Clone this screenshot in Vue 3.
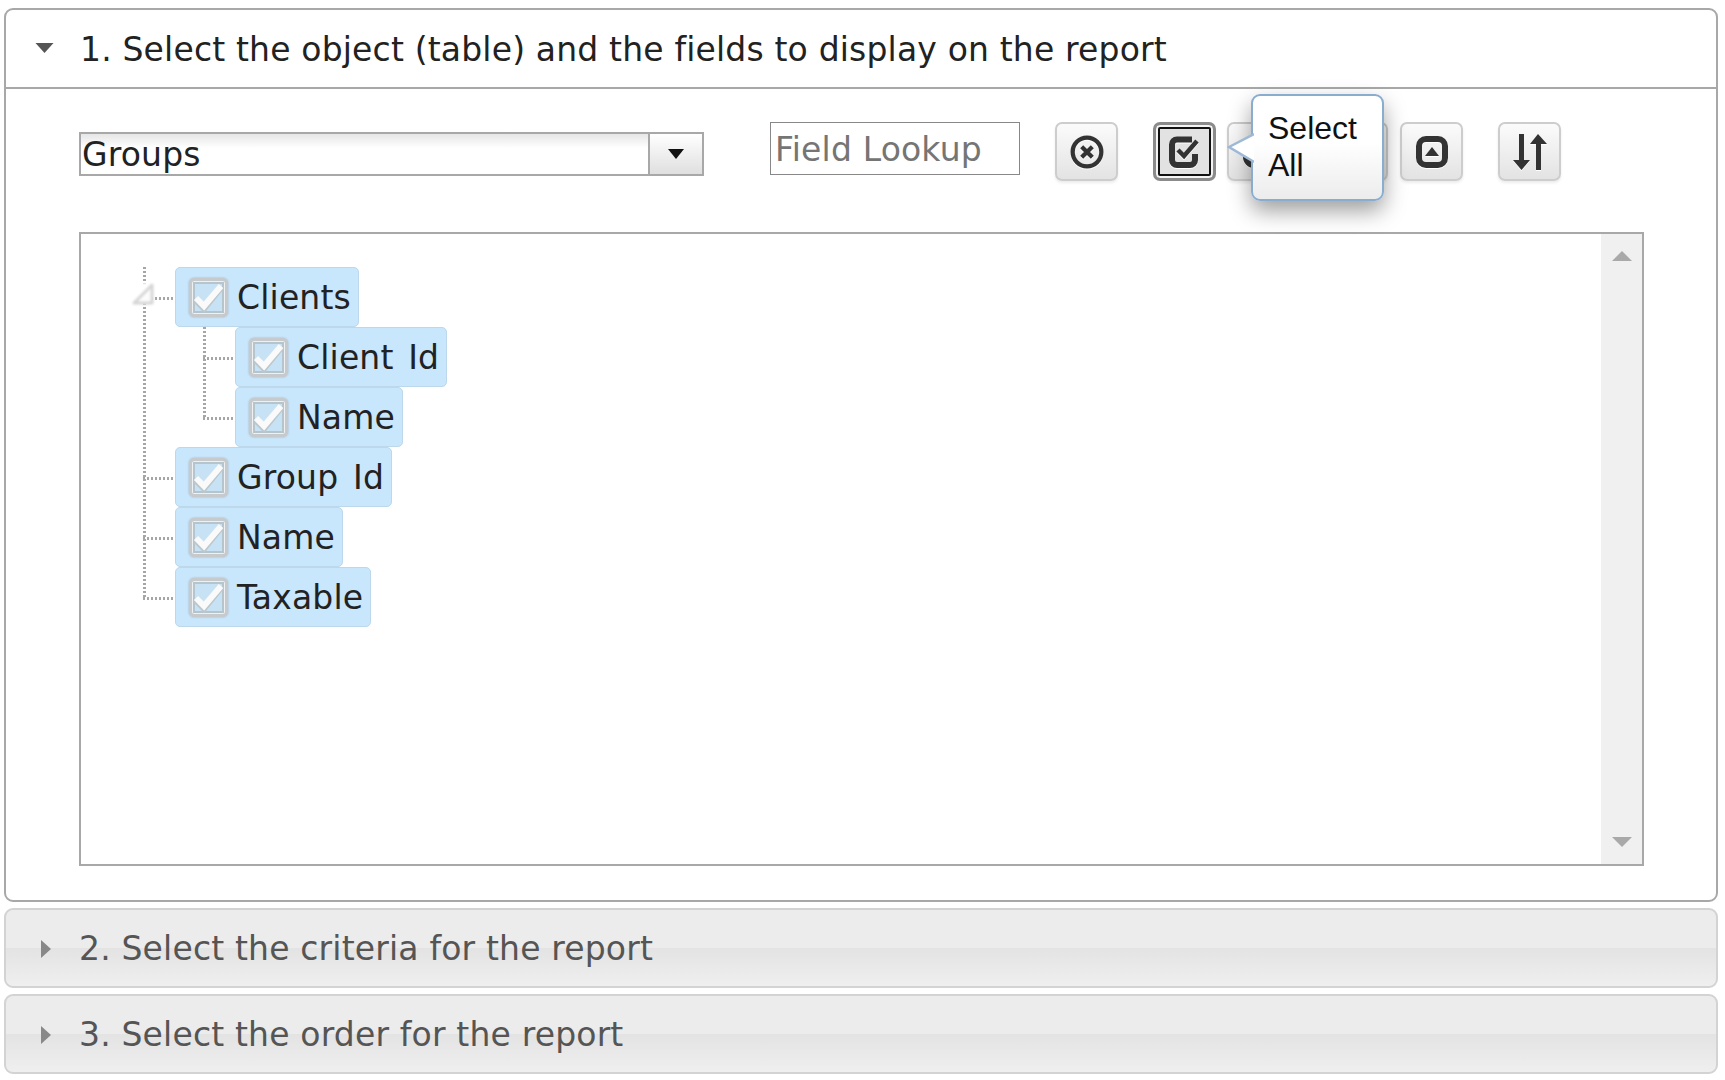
<template>
  <div class="page">
    <section class="panel panel--open">
      <header class="panel__head">
        <svg class="caret-down" viewBox="0 0 18 10"><path d="M0 0H18L9 10Z" /></svg>
        <span>1. Select the object (table) and the fields to display on the report</span>
      </header>

      <div class="panel__body">
        <div class="toolbar">
          <div class="dropdown">
            <span class="dropdown__value">Groups</span>
            <span class="dropdown__btn">
              <svg viewBox="0 0 16 10" width="16" height="10"><path d="M0 0H16L8 10Z" fill="#111" /></svg>
            </span>
          </div>
          <input class="lookup" type="text" placeholder="Field Lookup" />

          <div class="btn-row">
            <button class="tool" type="button">
              <svg viewBox="0 0 32 32" class="icon icon--ring">
                <circle cx="16" cy="16" r="13.5" />
                <path d="M11 11L21 21M21 11L11 21" />
              </svg>
            </button>
            <button class="tool tool--active tool--gap" type="button">
              <svg viewBox="0 0 32 32" class="icon">
                <path class="bold" d="M23 3.5H8A5 5 0 0 0 3 8.5V24A5 5 0 0 0 8 29H21A5 5 0 0 0 26 24V18" />
                <path class="thin" d="M9 14L15 20L28 5" />
              </svg>
            </button>
            <button class="tool tool--near" type="button">
              <svg viewBox="0 0 32 32" class="icon">
                <rect class="bold" x="3" y="3" width="26" height="26" rx="8" />
              </svg>
            </button>
            <button class="tool tool--gap" type="button">
              <svg viewBox="0 0 32 32" class="icon">
                <rect class="bold" x="3" y="3" width="26" height="26" rx="8" />
              </svg>
            </button>
            <button class="tool tool--near2" type="button">
              <svg viewBox="0 0 32 32" class="icon">
                <rect class="bold" x="3" y="3" width="26" height="26" rx="7" />
                <path class="solid" d="M16 11L23 20H9Z" />
              </svg>
            </button>
            <button class="tool tool--gap" type="button">
              <svg viewBox="0 0 36 36" class="icon icon--sort">
                <path class="solid" d="M7 0H12V26H18L9.5 36L1 26H7Z" />
                <path class="solid" d="M26 0L35 10H29V36H24V10H18Z" />
              </svg>
            </button>

            <div class="tip">
              <svg class="tip__arrow" viewBox="0 0 27 32" width="27" height="32">
                <path d="M27 2L2 15L27 30Z" fill="#fff" />
                <path d="M27 2L2 15L27 30" fill="none" stroke="#9db9d6" stroke-width="2.5" />
              </svg>
              Select<br />All
            </div>
          </div>
        </div>

        <div class="tree-box">
          <div class="tree-box__content">
            <ul class="tree">
              <li v-for="node in fields" :key="node.label" class="tree__item">
                <svg v-if="node.children" class="tree__toggle" viewBox="0 0 22 22" width="22" height="22">
                  <path d="M20 2V20H2Z" fill="#fcfcfc" stroke="#d6d6d6" stroke-width="3" stroke-linejoin="round" />
                </svg>
                <div class="node">
                  <svg class="check" viewBox="0 0 39 39" width="39" height="39">
                    <rect x="1.5" y="1.5" width="36" height="36" rx="4" fill="#eef1f3" stroke="#c6cacc" stroke-width="3" />
                    <rect x="5" y="5" width="29" height="29" fill="#c6e2f4" stroke="#b6c4cc" stroke-width="2" />
                    <path d="M7 22L15 30L32 9" fill="none" stroke="#bcc8ce" stroke-width="7" />
                    <path d="M7 20L15 28L32 8" fill="none" stroke="#fafafa" stroke-width="6" />
                  </svg>
                  <span>{{ node.label }}</span>
                </div>
                <ul v-if="node.children" class="tree tree--sub">
                  <li v-for="child in node.children" :key="child" class="tree__item">
                    <div class="node">
                      <svg class="check" viewBox="0 0 39 39" width="39" height="39">
                        <rect x="1.5" y="1.5" width="36" height="36" rx="4" fill="#eef1f3" stroke="#c6cacc" stroke-width="3" />
                        <rect x="5" y="5" width="29" height="29" fill="#c6e2f4" stroke="#b6c4cc" stroke-width="2" />
                        <path d="M7 22L15 30L32 9" fill="none" stroke="#bcc8ce" stroke-width="7" />
                        <path d="M7 20L15 28L32 8" fill="none" stroke="#fafafa" stroke-width="6" />
                      </svg>
                      <span>{{ child }}</span>
                    </div>
                  </li>
                </ul>
              </li>
            </ul>
          </div>
          <div class="scrollbar">
            <svg viewBox="0 0 20 10" width="20" height="10"><path d="M10 0L20 10H0Z" fill="#a9a9a9" /></svg>
            <svg viewBox="0 0 20 10" width="20" height="10"><path d="M0 0H20L10 10Z" fill="#a9a9a9" /></svg>
          </div>
        </div>
      </div>
    </section>

    <section v-for="title in closedSteps" :key="title" class="panel panel--closed">
      <svg class="caret-right" viewBox="0 0 10 18"><path d="M0 0L10 9L0 18Z" /></svg>
      <span>{{ title }}</span>
    </section>
    <section class="panel panel--closed"></section>
  </div>
</template>

<script setup>
const fields = [
  { label: 'Clients', children: ['Client Id', 'Name'] },
  { label: 'Group Id' },
  { label: 'Name' },
  { label: 'Taxable' },
];

const closedSteps = [
  '2. Select the criteria for the report',
  '3. Select the order for the report',
];
</script>

<style scoped>
.page {
  height: 1080px;
  overflow: hidden;
  box-sizing: border-box;
  padding: 8px 7px 0 4px;
  font-family: "DejaVu Sans", Verdana, sans-serif;
  font-size: 33px;
  letter-spacing: 0.17px;
  color: #222;
}

.panel {
  box-sizing: border-box;
  border-radius: 9px;
}

.panel--open {
  height: 894px;
  border: 2px solid #a8a8a8;
  background: #fff;
}

.panel__head {
  height: 79px;
  box-sizing: border-box;
  border-bottom: 2px solid #a8a8a8;
  display: flex;
  align-items: center;
  padding: 2px 0 0 74px;
  position: relative;
}

.caret-down {
  position: absolute;
  left: 29px;
  top: 33px;
  width: 19px;
  height: 10px;
  fill: #555;
}

.panel__body {
  padding: 33px 0 0 73px;
}

.toolbar {
  display: flex;
  align-items: flex-start;
}

.dropdown {
  width: 625px;
  height: 44px;
  margin-top: 10px;
  box-sizing: border-box;
  border: 2px solid #a8a8a8;
  display: flex;
  background: linear-gradient(#e6e6e6, #fff 14px);
}

.dropdown__value {
  flex: 1;
  padding-left: 1px;
  line-height: 42px;
}

.dropdown__btn {
  width: 54px;
  box-sizing: border-box;
  border-left: 2px solid #a8a8a8;
  background: linear-gradient(#fff, #dfdfdf);
  display: flex;
  align-items: center;
  justify-content: center;
}

.lookup {
  width: 250px;
  height: 53px;
  margin: 0 0 0 66px;
  box-sizing: border-box;
  border: 1px solid #888;
  padding: 1px 4px 0;
  font: inherit;
  letter-spacing: inherit;
  color: #222;
  outline: none;
}

.lookup::placeholder {
  color: #757575;
  opacity: 1;
}

.btn-row {
  display: flex;
  margin-left: 35px;
  position: relative;
}

.tool {
  width: 63px;
  height: 59px;
  box-sizing: border-box;
  padding: 0;
  border: 2px solid #cdcdcd;
  border-radius: 7px;
  background: linear-gradient(#fbfbfb, #e3e3e3);
  box-shadow: 0 2px 3px rgba(0, 0, 0, 0.08);
  display: flex;
  align-items: center;
  justify-content: center;
}

.tool--gap {
  margin-left: 35px;
}

.tool--near {
  margin-left: 11px;
}

.tool--near2 {
  margin-left: 12px;
}

.tool--active {
  border: 3px solid #8b8b8b;
  background: #e2e2e2;
  box-shadow: inset 0 0 0 2px #f4f4f4, inset 0 0 0 4px #111;
}

.icon {
  width: 32px;
  height: 32px;
  fill: none;
  stroke: #333;
  stroke-width: 5;
  filter: drop-shadow(0 1.5px 0 #fff);
}

.icon--ring {
  width: 34px;
  height: 34px;
  stroke-width: 4;
}

.icon .bold {
  stroke-width: 6;
}

.icon .thin {
  stroke-width: 4.5;
}

.icon .solid {
  fill: #333;
  stroke: none;
}

.icon--sort {
  width: 36px;
  height: 36px;
}

.tip {
  position: absolute;
  left: 196px;
  top: -28px;
  width: 133px;
  height: 107px;
  box-sizing: border-box;
  padding: 14px 0 0 15px;
  border: 2px solid #8aaccf;
  border-radius: 9px;
  background: linear-gradient(#fff 45%, #ececec);
  box-shadow: 0 10px 22px rgba(0, 0, 0, 0.38);
  font-family: "Liberation Sans", Arial, sans-serif;
  font-size: 32px;
  line-height: 37px;
  letter-spacing: 0;
  color: #111;
}

.tip__arrow {
  position: absolute;
  left: -26px;
  top: 36px;
}

.tree-box {
  width: 1565px;
  height: 634px;
  margin-top: 51px;
  box-sizing: border-box;
  border: 2px solid #a8a8a8;
  display: flex;
}

.tree-box__content {
  flex: 1;
  padding: 33px 0 0 94px;
}

.tree {
  list-style: none;
  margin: 0;
  padding: 0;
  position: relative;
}

/* vertical connector */
.tree::before {
  content: "";
  position: absolute;
  left: -32px;
  top: 0;
  bottom: 29px;
  width: 3px;
  background: repeating-linear-gradient(#a6a6a6 0 2.5px, transparent 2.5px 4px);
}

.tree--sub {
  padding-left: 60px;
}

.tree--sub::before {
  left: 28px;
}

.tree__item {
  position: relative;
  line-height: 0;
}

/* horizontal connector */
.tree__item::before {
  content: "";
  position: absolute;
  left: -32px;
  top: 30px;
  width: 32px;
  height: 3px;
  background: repeating-linear-gradient(90deg, #a6a6a6 0 2.5px, transparent 2.5px 4px);
}

.tree__toggle {
  position: absolute;
  left: -43px;
  top: 16px;
  z-index: 1;
  background: #fff;
  filter: blur(0.8px);
}

.node {
  display: inline-flex;
  align-items: center;
  height: 60px;
  box-sizing: border-box;
  padding: 0 7px 0 13px;
  border: 1px solid #bcd8ea;
  border-radius: 5px;
  background: #c8e6fc;
  vertical-align: top;
  word-spacing: 4px;
}

.node span {
  line-height: 1;
}

.check {
  margin-right: 9px;
  flex: none;
  filter: blur(0.4px) drop-shadow(0 0 1px #a9b4bb);
}

.scrollbar {
  width: 41px;
  background: #f0f0f0;
  display: flex;
  flex-direction: column;
  justify-content: space-between;
  align-items: center;
  padding: 17px 0 17px;
  box-sizing: border-box;
}

.panel--closed {
  height: 80px;
  margin-top: 6px;
  border: 2px solid #d3d3d3;
  background: linear-gradient(#ececec 50%, #e3e3e3 50%, #efefef);
  display: flex;
  align-items: center;
  padding-left: 73px;
  position: relative;
  color: #555;
}

.caret-right {
  position: absolute;
  left: 35px;
  top: 30px;
  width: 10px;
  height: 18px;
  fill: #888;
}
</style>

<style>
body {
  margin: 0;
  background: #fff;
}
</style>
